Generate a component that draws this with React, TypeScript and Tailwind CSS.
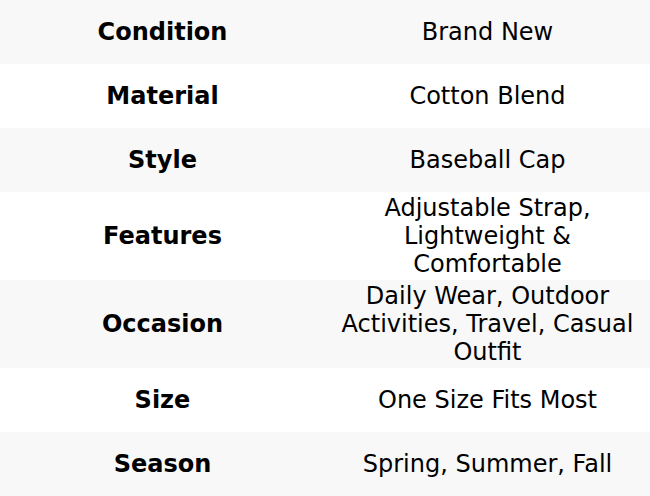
const rows: [string, string][] = [
  ["Condition", "Brand New"],
  ["Material", "Cotton Blend"],
  ["Style", "Baseball Cap"],
  ["Features", "Adjustable Strap, Lightweight & Comfortable"],
  ["Occasion", "Daily Wear, Outdoor Activities, Travel, Casual Outfit"],
  ["Size", "One Size Fits Most"],
  ["Season", "Spring, Summer, Fall"],
];

export default function App() {
  return (
    <div
      className="w-[650px] text-black"
      style={{ fontFamily: '"DejaVu Sans", sans-serif' }}
    >
      {rows.map(([label, value], i) => (
        <div
          key={label}
          className={`grid grid-cols-2 min-h-[64px] ${i % 2 === 0 ? "bg-[#f8f8f8]" : "bg-white"}`}
        >
          <div className="flex items-center justify-center px-3 py-[2px] text-center text-[24px] leading-7 font-bold">
            {label}
          </div>
          <div className="flex items-center justify-center px-3 py-[2px] text-center text-[24px] leading-7">
            {value}
          </div>
        </div>
      ))}
    </div>
  );
}
